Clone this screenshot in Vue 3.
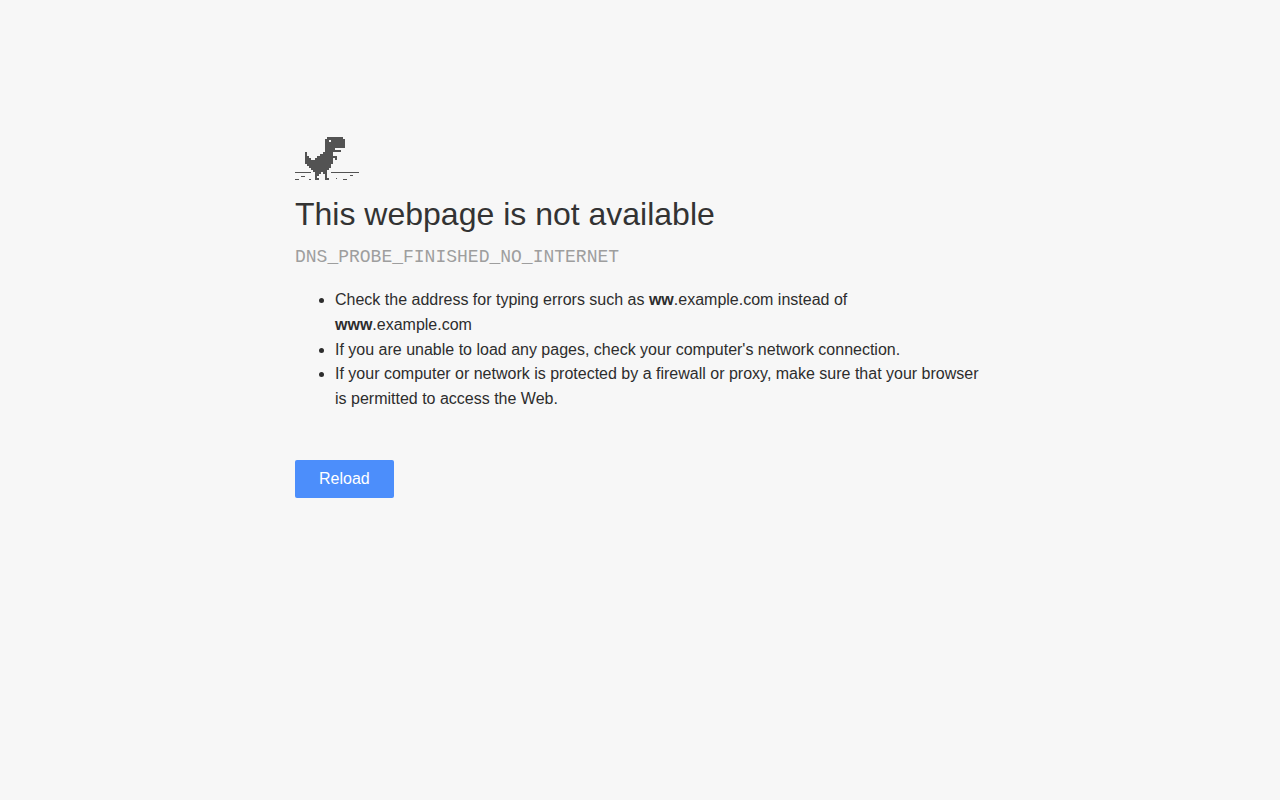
<script setup>
// Each run is [x, y, width, height] on a 64 x 43 grid.
const runs = [
  // head
  [32, 0, 16, 2], [30, 2, 20, 1], [30, 3, 4, 2], [36, 3, 14, 2], [30, 5, 20, 6],
  [30, 11, 10, 2], [30, 13, 16, 2],
  // tail, body and arm
  [10, 15, 2, 2], [28, 15, 10, 2],
  [10, 17, 2, 2], [25, 17, 13, 2],
  [10, 19, 4, 2], [22, 19, 20, 2],
  [10, 21, 6, 2], [20, 21, 18, 2], [40, 21, 2, 2],
  [10, 23, 28, 2], [10, 25, 28, 2],
  [12, 27, 24, 2], [14, 29, 22, 2], [16, 31, 18, 2], [18, 33, 14, 2],
  // legs
  [20, 35, 6, 2], [28, 35, 4, 2],
  [20, 37, 4, 2], [30, 37, 2, 2],
  [20, 39, 2, 2], [30, 39, 2, 2],
  [20, 41, 4, 2], [30, 41, 4, 2],
  // ground
  [0, 35, 16, 1], [36, 35, 28, 1], [6, 39, 4, 1], [55, 38, 3, 1],
  [0, 42, 4, 1], [14, 42, 2, 1], [41, 41, 1, 1], [48, 42, 4, 1]
]
const dino = runs.map(([x, y, w, h]) => `M${x} ${y}h${w}v${h}h-${w}z`).join('')

const reload = () => window.location.reload()
</script>

<template>
  <main class="error-page">
    <svg class="dino" viewBox="0 0 64 43" shape-rendering="crispEdges" aria-hidden="true">
      <path :d="dino" />
    </svg>
    <h1>This webpage is not available</h1>
    <p class="code">DNS_PROBE_FINISHED_NO_INTERNET</p>
    <ul>
      <li>Check the address for typing errors such as <strong>ww</strong>.example.com instead of <br><strong>www</strong>.example.com</li>
      <li>If you are unable to load any pages, check your computer's network connection.</li>
      <li>If your computer or network is protected by a firewall or proxy, make sure that your browser is permitted to access the Web.</li>
    </ul>
    <button type="button" @click="reload">Reload</button>
  </main>
</template>

<style>
body {
  background: #f7f7f7;
}
</style>

<style scoped>
.error-page {
  box-sizing: border-box;
  max-width: 690px;
  margin: 0 auto;
  padding-top: 137px;
  color: #2d2d2d;
  font: 16px/1.55 "Liberation Sans", Arial, sans-serif;
}
.dino {
  display: block;
  width: 64px;
  height: 43px;
  fill: #535353;
}
h1 {
  margin: 16px 0 0;
  color: #333;
  font-size: 32px;
  font-weight: 400;
  line-height: 36px;
}
.code {
  margin: 11px 0 0;
  color: #9e9e9e;
  font: 18px/28px "Liberation Mono", "Courier New", monospace;
}
ul {
  margin: 17px 0 0;
  padding: 0 0 0 40px;
}
button {
  display: block;
  margin-top: 48px;
  padding: 0 24px;
  border: 0;
  border-radius: 2px;
  background: #4c8efb;
  color: #fff;
  font: 16px/38px "Liberation Sans", Arial, sans-serif;
  cursor: pointer;
}
</style>
